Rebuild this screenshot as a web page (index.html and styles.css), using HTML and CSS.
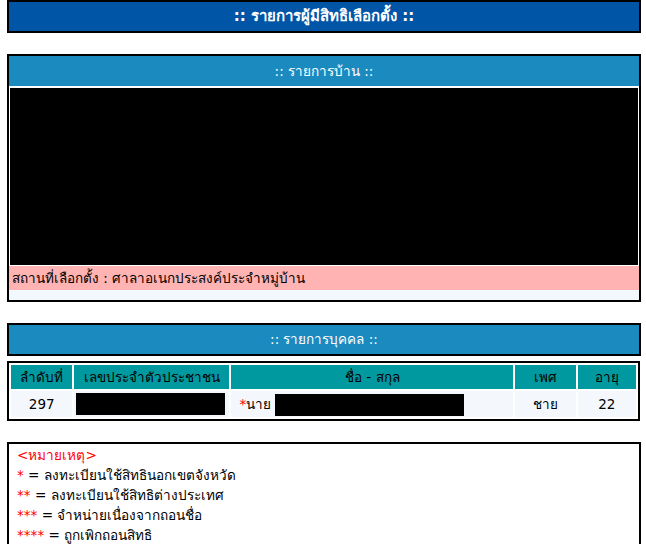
FILE: index.html
```html
<!DOCTYPE html>
<html lang="th">
<head>
    <meta charset="UTF-8">
    <title>รายการผู้มีสิทธิเลือกตั้ง</title>
    <link rel="stylesheet" href="styles.css">
</head>
<body>
    <div class="page">
        <div class="title-bar">:: รายการผู้มีสิทธิเลือกตั้ง ::</div>

        <div class="box">
            <div class="box-head">:: รายการบ้าน ::</div>
            <div class="house-body">
                <div class="redacted house-map"></div>
            </div>
            <div class="poll-place">สถานที่เลือกตั้ง : ศาลาอเนกประสงค์ประจำหมู่บ้าน</div>
            <div class="box-foot"></div>
        </div>

        <div class="box box-tight">
            <div class="box-head">:: รายการบุคคล ::</div>
        </div>

        <table class="person-table">
            <thead>
                <tr>
                    <th class="col-no">ลำดับที่</th>
                    <th class="col-id">เลขประจำตัวประชาชน</th>
                    <th class="col-name">ชื่อ - สกุล</th>
                    <th class="col-sex">เพศ</th>
                    <th class="col-age">อายุ</th>
                </tr>
            </thead>
            <tbody>
                <tr>
                    <td>297</td>
                    <td><div class="redacted id-bar"></div></td>
                    <td class="name-cell"><span class="mark">*</span>นาย <span class="redacted name-bar"></span></td>
                    <td>ชาย</td>
                    <td>22</td>
                </tr>
            </tbody>
        </table>

        <div class="notes">
            <div class="note-title">&lt;หมายเหตุ&gt;</div>
            <div><span class="mark">*</span> = ลงทะเบียนใช้สิทธินอกเขตจังหวัด</div>
            <div><span class="mark">**</span> = ลงทะเบียนใช้สิทธิต่างประเทศ</div>
            <div><span class="mark">***</span> = จำหน่ายเนื่องจากถอนชื่อ</div>
            <div><span class="mark">****</span> = ถูกเพิกถอนสิทธิ</div>
        </div>
    </div>
</body>
</html>
```

FILE: styles.css
```css
body {
    margin: 0;
    padding: 0;
    font-family: Tahoma, 'DejaVu Sans', 'Noto Sans', sans-serif;
    font-size: 13.5px;
    color: #000;
    background: #fff;
}

.page {
    padding: 0 5px 0 7px;
}

.title-bar {
    border: 2px solid #000;
    background-color: #0055a6;
    color: #fff;
    font-weight: bold;
    font-size: 15px;
    text-align: center;
    height: 29px;
    line-height: 29px;
    margin-bottom: 21px;
}

.box {
    border: 2px solid #000;
    margin-bottom: 21px;
}

.box-tight {
    margin-bottom: 5px;
}

.box-head {
    background-color: #1b8abf;
    color: #fff;
    font-size: 13.5px;
    text-align: center;
    height: 30px;
    line-height: 30px;
}

.box-tight .box-head {
    height: 29px;
    line-height: 29px;
}

.house-body {
    padding: 2px 1px 1px;
}

.redacted {
    background-color: #000;
}

.house-map {
    height: 177px;
}

.poll-place {
    background-color: #ffb3b3;
    height: 24px;
    line-height: 24px;
    padding-left: 3px;
}

.box-foot {
    background-color: #f3f8fd;
    height: 10px;
}

.person-table {
    width: 633px;
    border: 2px solid #000;
    border-spacing: 2px;
    margin-bottom: 21px;
}

.person-table th {
    background-color: #00999f;
    font-weight: normal;
    height: 24px;
    padding: 0;
    text-align: center;
}

.person-table td {
    background-color: #f4f8fd;
    height: 26px;
    padding: 0;
    text-align: center;
}

.col-no { width: 61px; }
.col-id { width: 154px; }
.col-name { width: 280px; }
.col-sex { width: 60px; }
.col-age { width: 58px; }

.id-bar {
    height: 22px;
    margin: 0 4px 0 2px;
}

.person-table td.name-cell {
    text-align: left;
    padding-left: 8px;
}

.name-bar {
    display: inline-block;
    width: 189px;
    height: 22px;
    vertical-align: middle;
}

.mark {
    color: #ff0000;
}

.notes {
    border: 2px solid #000;
    padding: 1px 8px 0;
    font-size: 13.6px;
    line-height: 20px;
    height: 120px;
}

.note-title {
    color: #ff0000;
}
```
